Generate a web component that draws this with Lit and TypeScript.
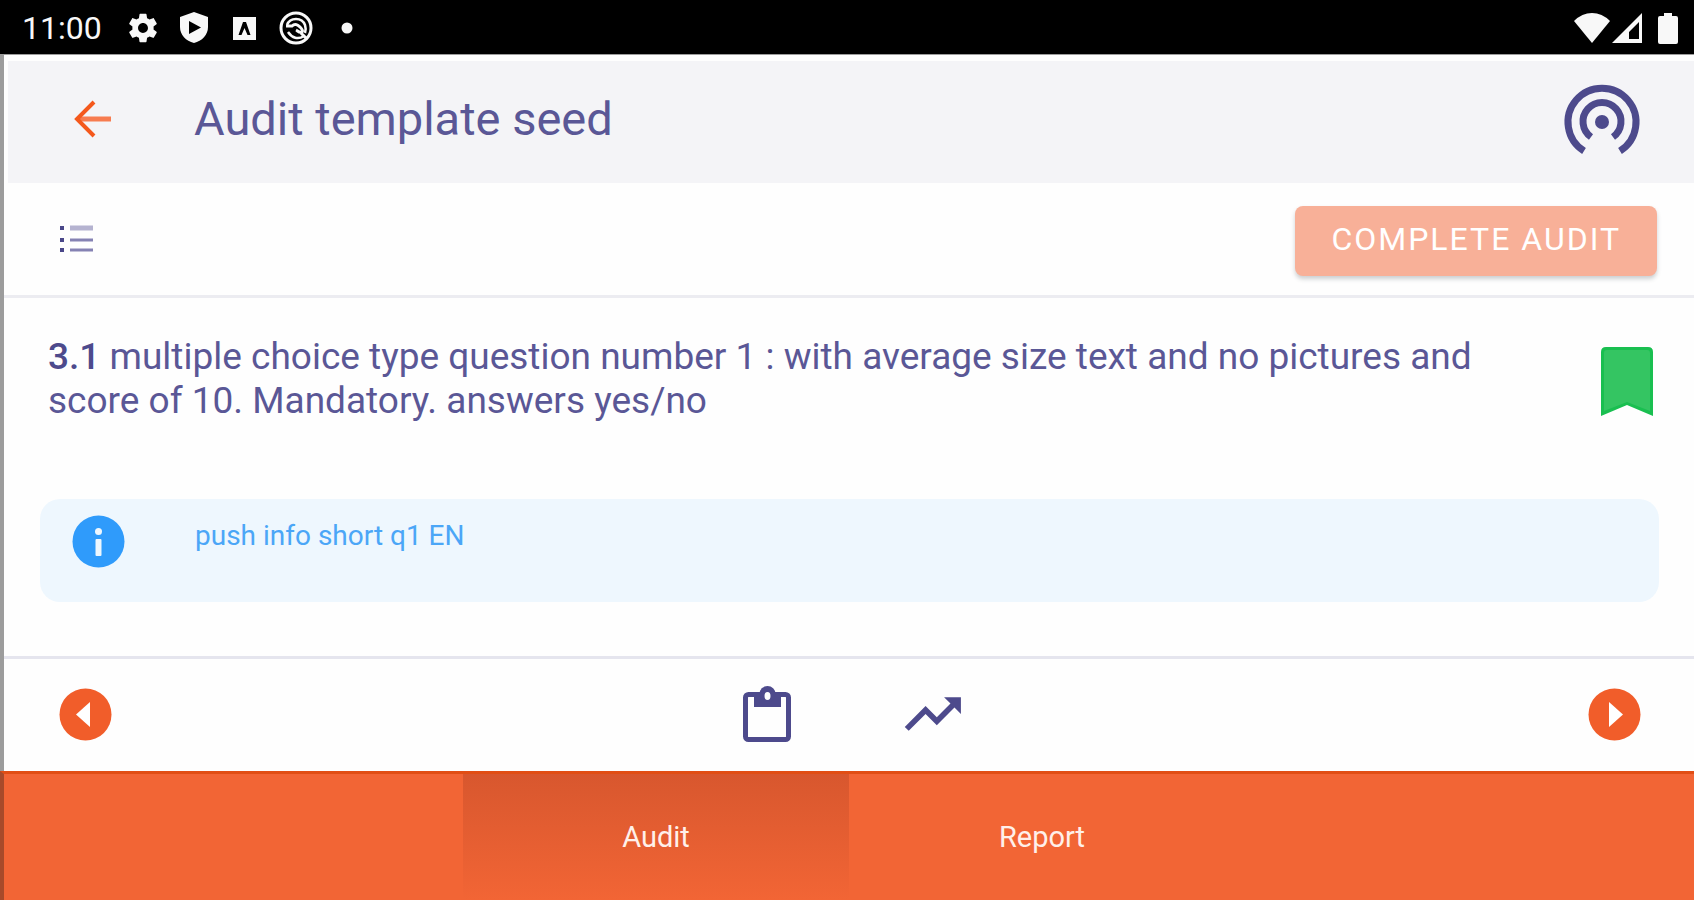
import { LitElement, html, css } from "lit";
import { customElement, state } from "lit/decorators.js";

@customElement("status-bar")
class StatusBar extends LitElement {
  static styles = css`
    :host {
      box-sizing: border-box;
      display: flex;
      align-items: center;
      justify-content: space-between;
      height: 54px;
      padding: 2px 16px 0 22px;
      background: #000;
      color: #f8f8f8;
      font-size: 32px;
      line-height: 40px;
    }
    .group {
      display: flex;
      align-items: center;
    }
    .notices {
      gap: 17px;
      margin-left: 24px;
    }
    .signals {
      gap: 2px;
    }
    svg {
      display: block;
      fill: currentColor;
    }
    .battery {
      margin-left: 14px;
    }
  `;

  render() {
    return html`
      <div class="group">
        <time>11:00</time>
        <div class="group notices">
          <svg width="34" height="34" viewBox="0 0 24 24" aria-hidden="true">
            <path d="M19.43 12.98c.04-.32.07-.64.07-.98s-.03-.66-.07-.98l2.11-1.65c.19-.15.24-.42.12-.64l-2-3.46c-.12-.22-.39-.3-.61-.22l-2.49 1c-.52-.4-1.08-.73-1.69-.98l-.38-2.65C14.46 2.18 14.25 2 14 2h-4c-.25 0-.46.18-.49.42l-.38 2.65c-.61.25-1.17.59-1.69.98l-2.49-1c-.23-.09-.49 0-.61.22l-2 3.46c-.13.22-.07.49.12.64l2.11 1.65c-.04.32-.07.65-.07.98s.03.66.07.98l-2.11 1.65c-.19.15-.24.42-.12.64l2 3.46c.12.22.39.3.61.22l2.49-1c.52.4 1.08.73 1.69.98l.38 2.65c.03.24.24.42.49.42h4c.25 0 .46-.18.49-.42l.38-2.65c.61-.25 1.17-.59 1.69-.98l2.49 1c.23.09.49 0 .61-.22l2-3.46c.12-.22.07-.49-.12-.64l-2.11-1.65zM12 15.500c-1.930 0-3.500-1.570-3.500-3.500s1.570-3.500 3.500-3.500 3.500 1.570 3.500 3.500-1.570 3.500-3.500 3.500z" />
          </svg>
          <svg width="34" height="34" viewBox="0 0 34 34" aria-hidden="true">
            <path fill-rule="evenodd" d="M17 1 31 6v10c0 8-6 14-14 16C9 30 3 24 3 16V6zM12 10v13l12-6.500z" />
          </svg>
          <svg width="34" height="34" viewBox="0 0 34 34" aria-hidden="true">
            <path fill-rule="evenodd" d="M5 6h23v23H5zM15 11l-4.500 13h3l3-7 3 7h3l-4.500-13z" />
          </svg>
          <svg width="34" height="34" viewBox="0 0 34 34" aria-hidden="true">
            <g fill="none" stroke="currentColor">
              <circle cx="17" cy="17" r="15" stroke-width="3" />
              <path d="M8 14C11 6 23 6 26 14c1 3 1 5 0 8M9 21c4 6 10 8 16 4" stroke-width="2.500" />
              <path d="M7 15h6c3-3 6-1 8 1s3 4 2 5c-3 1-4-1-6-2M22 22l6 6" stroke-width="3" />
            </g>
          </svg>
          <svg width="34" height="34" viewBox="0 0 34 34" aria-hidden="true">
            <circle cx="17" cy="17" r="5.500" />
          </svg>
        </div>
      </div>
      <div class="group signals">
        <svg width="36" height="30" viewBox="0 0 36 30" aria-hidden="true">
          <path d="M0 8Q8 0 18 0t18 8L18 30z" />
        </svg>
        <svg width="30" height="30" viewBox="0 0 30 30" aria-hidden="true">
          <path fill-rule="evenodd" d="M30 0v30H0zM27 9 17 19v7h10z" />
        </svg>
        <svg class="battery" width="20" height="31" viewBox="0 0 20 31" aria-hidden="true">
          <path d="M6 0h8v3h4q2 0 2 2v24q0 2-2 2H2q-2 0-2-2V5q0-2 2-2h4z" />
        </svg>
      </div>
    `;
  }
}

@customElement("app-root")
class AppRoot extends LitElement {
  @state() private tab = "Audit";

  static styles = css`
    :host {
      display: flex;
      flex-direction: column;
      min-height: 100vh;
      background: #fefefe;
      color: #4d4a8c;
      font-family: Roboto, "Noto Sans", sans-serif;
    }
    * {
      box-sizing: border-box;
    }
    svg {
      display: block;
    }
    button {
      display: block;
      margin: 0;
      padding: 0;
      border: 0;
      background: none;
      color: inherit;
      font: inherit;
      cursor: pointer;
    }
    .screen {
      flex: 1;
      display: flex;
      flex-direction: column;
      border-left: 4px solid #9c9c9c;
      border-top: 1px solid #9c9c9c;
    }
    .header {
      display: flex;
      align-items: center;
      gap: 80px;
      height: 122px;
      margin: 6px 0 0 4px;
      padding: 0 52px 0 64px;
      background: #f4f4f7;
    }
    .back {
      padding-bottom: 6px;
      color: #f4581c;
    }
    .title {
      flex: 1;
      margin: 0;
      padding-bottom: 6px;
      color: #5a5796;
      font-size: 47px;
      line-height: 56px;
      font-weight: 400;
    }
    .toolbar {
      display: flex;
      align-items: center;
      justify-content: space-between;
      height: 115px;
      padding: 0 37px 0 54px;
      border-bottom: 3px solid #ececf1;
    }
    .complete {
      height: 70px;
      margin-top: 4px;
      padding: 0 36px 4px;
      border-radius: 8px;
      background: #f8b098;
      color: #fff;
      font-size: 32px;
      line-height: 40px;
      letter-spacing: 2px;
      box-shadow: 0 3px 4px rgba(60, 70, 80, 0.25);
    }
    .content {
      flex: 1;
      display: flex;
      flex-direction: column;
      gap: 76px;
      padding: 37px 35px 48px 36px;
    }
    .question {
      display: flex;
      justify-content: space-between;
      gap: 60px;
      padding: 0 6px 0 8px;
    }
    .text {
      flex: 1;
      max-width: 1430px;
      margin: 0;
      color: #5a5796;
      font-size: 37px;
      line-height: 44px;
    }
    .text b {
      color: #4d4a8c;
      font-weight: 500;
    }
    .flag {
      padding-top: 12px;
      align-self: flex-start;
    }
    .info {
      display: flex;
      align-items: flex-start;
      gap: 70px;
      min-height: 103px;
      padding: 16px 32px;
      border-radius: 20px;
      background: #eef7fe;
      color: #4ba6f7;
      font-size: 28px;
      line-height: 42px;
    }
    .info p {
      margin: 0;
    }
    .pager {
      display: grid;
      grid-template-columns: 1fr auto 1fr;
      align-items: center;
      height: 115px;
      padding: 0 53px 2px 55px;
      border-top: 3px solid #e5e5ee;
    }
    .tools {
      display: flex;
      align-items: center;
      gap: 100px;
    }
    .next {
      justify-self: end;
    }
    .tabs {
      display: flex;
      justify-content: center;
      height: 129px;
      margin-left: -4px;
      border-top: 3px solid #e14e15;
      border-left: 4px solid #a84a2a;
      background: #f26535;
      color: #fff;
      font-size: 29px;
      line-height: 40px;
    }
    .tab {
      width: 386px;
      color: #fff0ea;
    }
    .tab[aria-selected="true"] {
      background: linear-gradient(#d8572e, #f26535);
    }
  `;

  render() {
    return html`
      <status-bar></status-bar>
      <div class="screen">
        <header class="header">
          <button class="back" aria-label="Back">
            <svg width="42" height="42" viewBox="0 0 42 42" fill="none">
              <path d="M39 21H6" stroke="#f77c50" stroke-width="5" />
              <path d="M22 4 5 21l17 17" stroke="currentColor" stroke-width="4" />
            </svg>
          </button>
          <h1 class="title">Audit template seed</h1>
          <button aria-label="Broadcast">
            <svg width="80" height="80" viewBox="0 0 80 80" fill="none" stroke="currentColor" stroke-width="7">
              <path d="M22 69a34 34 0 1 1 36 0M29 55a19 19 0 1 1 22 0" />
              <circle cx="40" cy="40" r="7" fill="currentColor" stroke="none" />
            </svg>
          </button>
        </header>
        <div class="toolbar">
          <button aria-label="Question list">
            <svg width="36" height="32" viewBox="0 0 36 32" fill="none">
              <path d="M2 5h4M2 17h4M2 27h4" stroke="#4a4789" stroke-width="4" />
              <path d="M12 5h23" stroke="#b5b3d0" stroke-width="5" />
              <path d="M12 17h23M12 27h23" stroke="#8582b3" stroke-width="3" />
            </svg>
          </button>
          <button class="complete">COMPLETE AUDIT</button>
        </div>
        <main class="content">
          <section class="question">
            <p class="text">
              <b>3.1</b> multiple choice type question number 1 : with average size text and no pictures and score of
              10. Mandatory. answers yes/no
            </p>
            <button class="flag" aria-label="Bookmark">
              <svg width="52" height="69" viewBox="0 0 52 69">
                <path d="M5 0h42q5 0 5 5v64L26 58 0 69V5q0-5 5-5z" fill="#19bf50" />
                <path d="M6 3h40q3 0 3 3v58L26 55 3 64V6q0-3 3-3z" fill="#34c562" />
              </svg>
            </button>
          </section>
          <section class="info">
            <svg width="53" height="53" viewBox="0 0 53 53">
              <circle cx="26.500" cy="26.500" r="26" fill="#2f9bfb" />
              <circle cx="26.500" cy="16.500" r="3.500" fill="#eef7fe" />
              <rect x="23.500" y="24" width="6" height="17" rx="1" fill="#eef7fe" />
            </svg>
            <p>push info short q1 EN</p>
          </section>
        </main>
        <nav class="pager" aria-label="Questions">
          <button aria-label="Previous question">
            <svg width="53" height="53" viewBox="0 0 53 53">
              <circle cx="26.500" cy="26.500" r="26" fill="#f15d2a" />
              <path d="M31 14v25L17 26.500z" fill="#fff" />
            </svg>
          </button>
          <div class="tools">
            <button aria-label="Notes">
              <svg width="64" height="64" viewBox="0 0 64 64" fill="none" stroke="currentColor">
                <rect x="9.500" y="12.500" width="43" height="45" rx="3" stroke-width="5" />
                <path d="M18 12h27v13H18z" fill="currentColor" stroke="none" />
                <circle cx="31.500" cy="12" r="8" fill="currentColor" stroke="none" />
                <ellipse cx="31.500" cy="14" rx="3" ry="4" fill="#fefefe" stroke="none" />
              </svg>
            </button>
            <button aria-label="Trends">
              <svg width="64" height="64" viewBox="0.3 0.6 22.8 22.8" fill="currentColor">
                <path d="M16 6l2.290 2.290-4.880 4.880-4-4L2 16.590 3.410 18l6-6 4 4 6.300-6.290L22 12V6z" />
              </svg>
            </button>
          </div>
          <button class="next" aria-label="Next question">
            <svg width="53" height="53" viewBox="0 0 53 53">
              <circle cx="26.500" cy="26.500" r="26" fill="#f15d2a" />
              <path d="M21 14v25l14-12.500z" fill="#fff" />
            </svg>
          </button>
        </nav>
        <div class="tabs" role="tablist">
          ${["Audit", "Report"].map(
            (name) => html`
              <button
                class="tab"
                role="tab"
                aria-selected=${this.tab === name ? "true" : "false"}
                @click=${() => (this.tab = name)}
              >
                ${name}
              </button>
            `
          )}
        </div>
      </div>
    `;
  }
}
